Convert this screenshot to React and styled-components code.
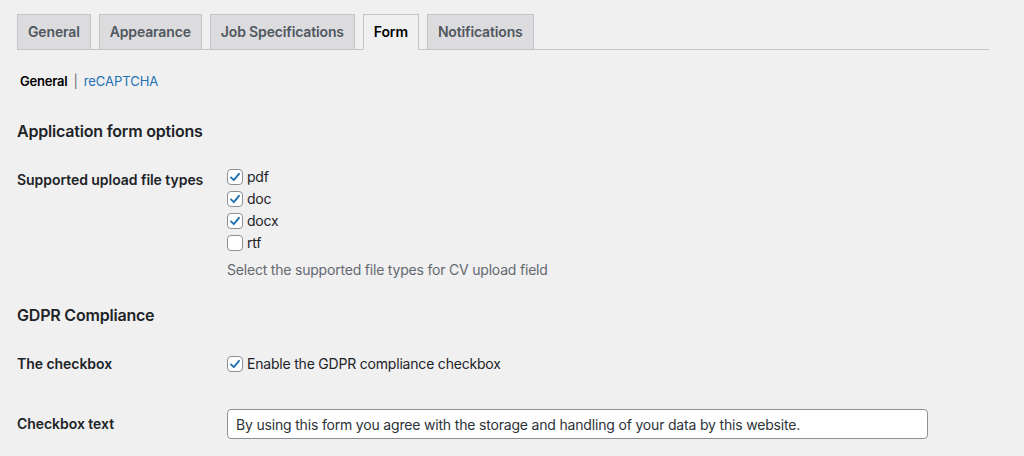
import React from 'react'
import styled, { createGlobalStyle } from 'styled-components'

const GlobalStyle = createGlobalStyle`
  body {
    margin: 0;
    background: #f0f0f1;
    color: #1d2327;
    font-family: Inter, "Noto Sans", sans-serif;
    font-size: 13px;
    letter-spacing: -0.2px;
  }
`

const Wrap = styled.div`
  padding: 14px 35px 0 17px;
`

const TabBar = styled.nav`
  display: flex;
  gap: 8px;
  border-bottom: 1px solid #c3c4c7;
`

const Tab = styled.a`
  display: block;
  margin-bottom: -1px;
  padding: 5px 10px;
  font-size: 14px;
  font-weight: 600;
  line-height: 24px;
  letter-spacing: -0.15px;
  border: 1px solid #c3c4c7;
  border-bottom-color: ${p => (p.$active ? '#f0f0f1' : '#c3c4c7')};
  background: ${p => (p.$active ? '#f0f0f1' : '#dcdcde')};
  color: ${p => (p.$active ? '#000' : '#50575e')};
  text-decoration: none;
  cursor: pointer;
`

const SubNav = styled.ul`
  display: flex;
  align-items: center;
  list-style: none;
  margin: 21px 0 0;
  padding: 0 0 0 3px;
  font-size: 13px;
  line-height: 20px;
  color: #50575e;
`

const SubLink = styled.li`
  color: ${p => (p.$current ? '#000' : '#2271b1')};
  font-weight: ${p => (p.$current ? 600 : 400)};
  letter-spacing: ${p => (p.$current ? '-0.2px' : '-0.05px')};
`

const Sep = styled.li`
  margin: 0 6px;
  color: #646970;
`

const Heading = styled.h2`
  margin: ${p => p.$top}px 0 8px;
  font-size: 16px;
  font-weight: 600;
  line-height: 22px;
  color: #1d2327;
`

const Table = styled.table`
  border-collapse: collapse;
  width: 100%;
`

const Th = styled.th`
  width: 200px;
  padding: 20px 10px 20px 0;
  text-align: left;
  vertical-align: top;
  font-size: 14px;
  font-weight: 600;
  line-height: 20px;
  letter-spacing: -0.05px;
  color: #1d2327;
`

const Td = styled.td`
  padding: ${p => p.$pad || '16px 10px 15px 0'};
  vertical-align: top;
  font-size: 14px;
  line-height: 20px;
`

const CheckList = styled.div`
  display: flex;
  flex-direction: column;
`

const CheckRow = styled.label`
  display: flex;
  align-items: center;
  gap: 4px;
  height: ${p => p.$h || 22}px;
  font-size: 14px;
  color: #1d2327;
`

const Box = styled.span`
  box-sizing: border-box;
  display: flex;
  align-items: center;
  justify-content: center;
  width: 16px;
  height: 16px;
  border: 1px solid #8c8f94;
  border-radius: 4px;
  background: #fff;
`

const Description = styled.p`
  margin: 6px 0 0;
  font-size: 14px;
  line-height: 20px;
  color: #646970;
`

const TextInput = styled.input`
  box-sizing: border-box;
  width: 701px;
  height: 30px;
  padding: 0 8px;
  border: 1px solid #8c8f94;
  border-radius: 4px;
  background: #fff;
  font-family: inherit;
  font-size: 14px;
  letter-spacing: -0.18px;
  color: #2c3338;
  outline: none;
`

const Checkbox = ({ checked, label, h }) => (
  <CheckRow $h={h}>
    <Box>
      {checked && (
        <svg width="12" height="12" viewBox="0 0 12 12">
          <path d="M2 6.4 L4.8 9.2 L10 2.8" fill="none" stroke="#2271b1" strokeWidth="1.9" strokeLinecap="round" strokeLinejoin="round" />
        </svg>
      )}
    </Box>
    {label}
  </CheckRow>
)

const tabs = ['General', 'Appearance', 'Job Specifications', 'Form', 'Notifications']

const fileTypes = [
  { name: 'pdf', on: true },
  { name: 'doc', on: true },
  { name: 'docx', on: true },
  { name: 'rtf', on: false },
]

export default function App() {
  return (
    <>
      <GlobalStyle />
      <Wrap>
        <TabBar>
          {tabs.map(t => (
            <Tab key={t} $active={t === 'Form'}>{t}</Tab>
          ))}
        </TabBar>

        <SubNav>
          <SubLink $current>General</SubLink>
          <Sep>|</Sep>
          <SubLink>reCAPTCHA</SubLink>
        </SubNav>

        <Heading $top={29}>Application form options</Heading>
        <Table>
          <tbody>
            <tr>
              <Th>Supported upload file types</Th>
              <Td>
                <CheckList>
                  {fileTypes.map(f => (
                    <Checkbox key={f.name} checked={f.on} label={f.name} />
                  ))}
                </CheckList>
                <Description>Select the supported file types for CV upload field</Description>
              </Td>
            </tr>
          </tbody>
        </Table>

        <Heading $top={9}>GDPR Compliance</Heading>
        <Table>
          <tbody>
            <tr>
              <Th>The checkbox</Th>
              <Td $pad="20px 10px 20px 0">
                <Checkbox checked h={20} label="Enable the GDPR compliance checkbox" />
              </Td>
            </tr>
            <tr>
              <Th>Checkbox text</Th>
              <Td $pad="15px 10px 15px 0">
                <TextInput
                  type="text"
                  defaultValue="By using this form you agree with the storage and handling of your data by this website."
                />
              </Td>
            </tr>
          </tbody>
        </Table>
      </Wrap>
    </>
  )
}
